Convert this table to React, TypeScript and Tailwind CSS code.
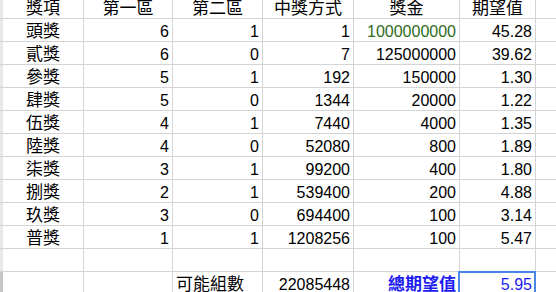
const grid = "grid grid-cols-[3px_81px_89px_90px_91px_106px_76px_1fr]";
const line = "border-r border-b border-[#d4d4d4]";

const prizes = [
  ["頭獎", "6", "1", "1", "1000000000", "45.28"],
  ["貳獎", "6", "0", "7", "125000000", "39.62"],
  ["參獎", "5", "1", "192", "150000", "1.30"],
  ["肆獎", "5", "0", "1344", "20000", "1.22"],
  ["伍獎", "4", "1", "7440", "4000", "1.35"],
  ["陸獎", "4", "0", "52080", "800", "1.89"],
  ["柒獎", "3", "1", "99200", "400", "1.80"],
  ["捌獎", "2", "1", "539400", "200", "4.88"],
  ["玖獎", "3", "0", "694400", "100", "3.14"],
  ["普獎", "1", "1", "1208256", "100", "5.47"],
];

function Num({ v, className = "" }: { v?: string; className?: string }) {
  return (
    <div className={`${line} flex items-end justify-end pr-[3px] text-[16px] leading-[18px] ${className}`}>
      {v}
    </div>
  );
}

function Label({ v, className = "" }: { v?: string; className?: string }) {
  return (
    <div className={`${line} flex items-end justify-center text-[17px] leading-[18px] ${className}`}>
      {v}
    </div>
  );
}

export default function App() {
  return (
    <div className="h-[292px] w-[556px] overflow-hidden bg-white text-black font-[family-name:Liberation_Sans,Noto_Sans_CJK_TC,sans-serif]">
      {/* header */}
      <div className={`${grid} h-[19px]`}>
        <div className="bg-[#e8e8e8] border-b border-[#d4d4d4]" />
        <Label v="獎項" />
        <Label v="第一區" />
        <Label v="第二區" />
        <Label v="中獎方式" />
        <Label v="獎金" />
        <Label v="期望值" />
        <div className="border-b border-[#d4d4d4]" />
      </div>

      {prizes.map((p) => (
        <div key={p[0]} className={`${grid} h-[23px]`}>
          <div className="bg-[#e8e8e8] border-b border-[#d4d4d4]" />
          <Label v={p[0]} />
          <Num v={p[1]} />
          <Num v={p[2]} />
          <Num v={p[3]} />
          <Num v={p[4]} className={p[0] === "頭獎" ? "text-[#2e6a1c]" : ""} />
          <Num v={p[5]} />
          <div className="border-b border-[#d4d4d4]" />
        </div>
      ))}

      {/* empty row */}
      <div className={`${grid} h-[23px]`}>
        <div className="bg-[#e8e8e8] border-b border-[#d4d4d4]" />
        <Label />
        <Label />
        <Label />
        <Label />
        <Label />
        <Label />
        <div className="border-b border-[#d4d4d4]" />
      </div>

      {/* totals */}
      <div className={`${grid} h-[23px]`}>
        <div className="bg-[#c6c6c6]" />
        <Label />
        <Label />
        <div className={`${line} flex items-end pl-[3px] text-[17px] leading-[18px]`}>可能組數</div>
        <Num v="22085448" />
        <div className={`${line} flex items-end justify-end pr-[3px] text-[17px] leading-[18px] font-bold text-[#1c1cf0]`}>
          總期望值
        </div>
        <div className={`${line} relative flex items-end justify-end pr-[3px] text-[16px] leading-[18px] text-[#1c1cf0]`}>
          5.95
          <div className="absolute -left-[2px] -top-[1px] -right-[1px] bottom-0 border-2 border-[#4a86e8]" />
        </div>
        <div className="border-b border-[#d4d4d4]" />
      </div>
    </div>
  );
}
